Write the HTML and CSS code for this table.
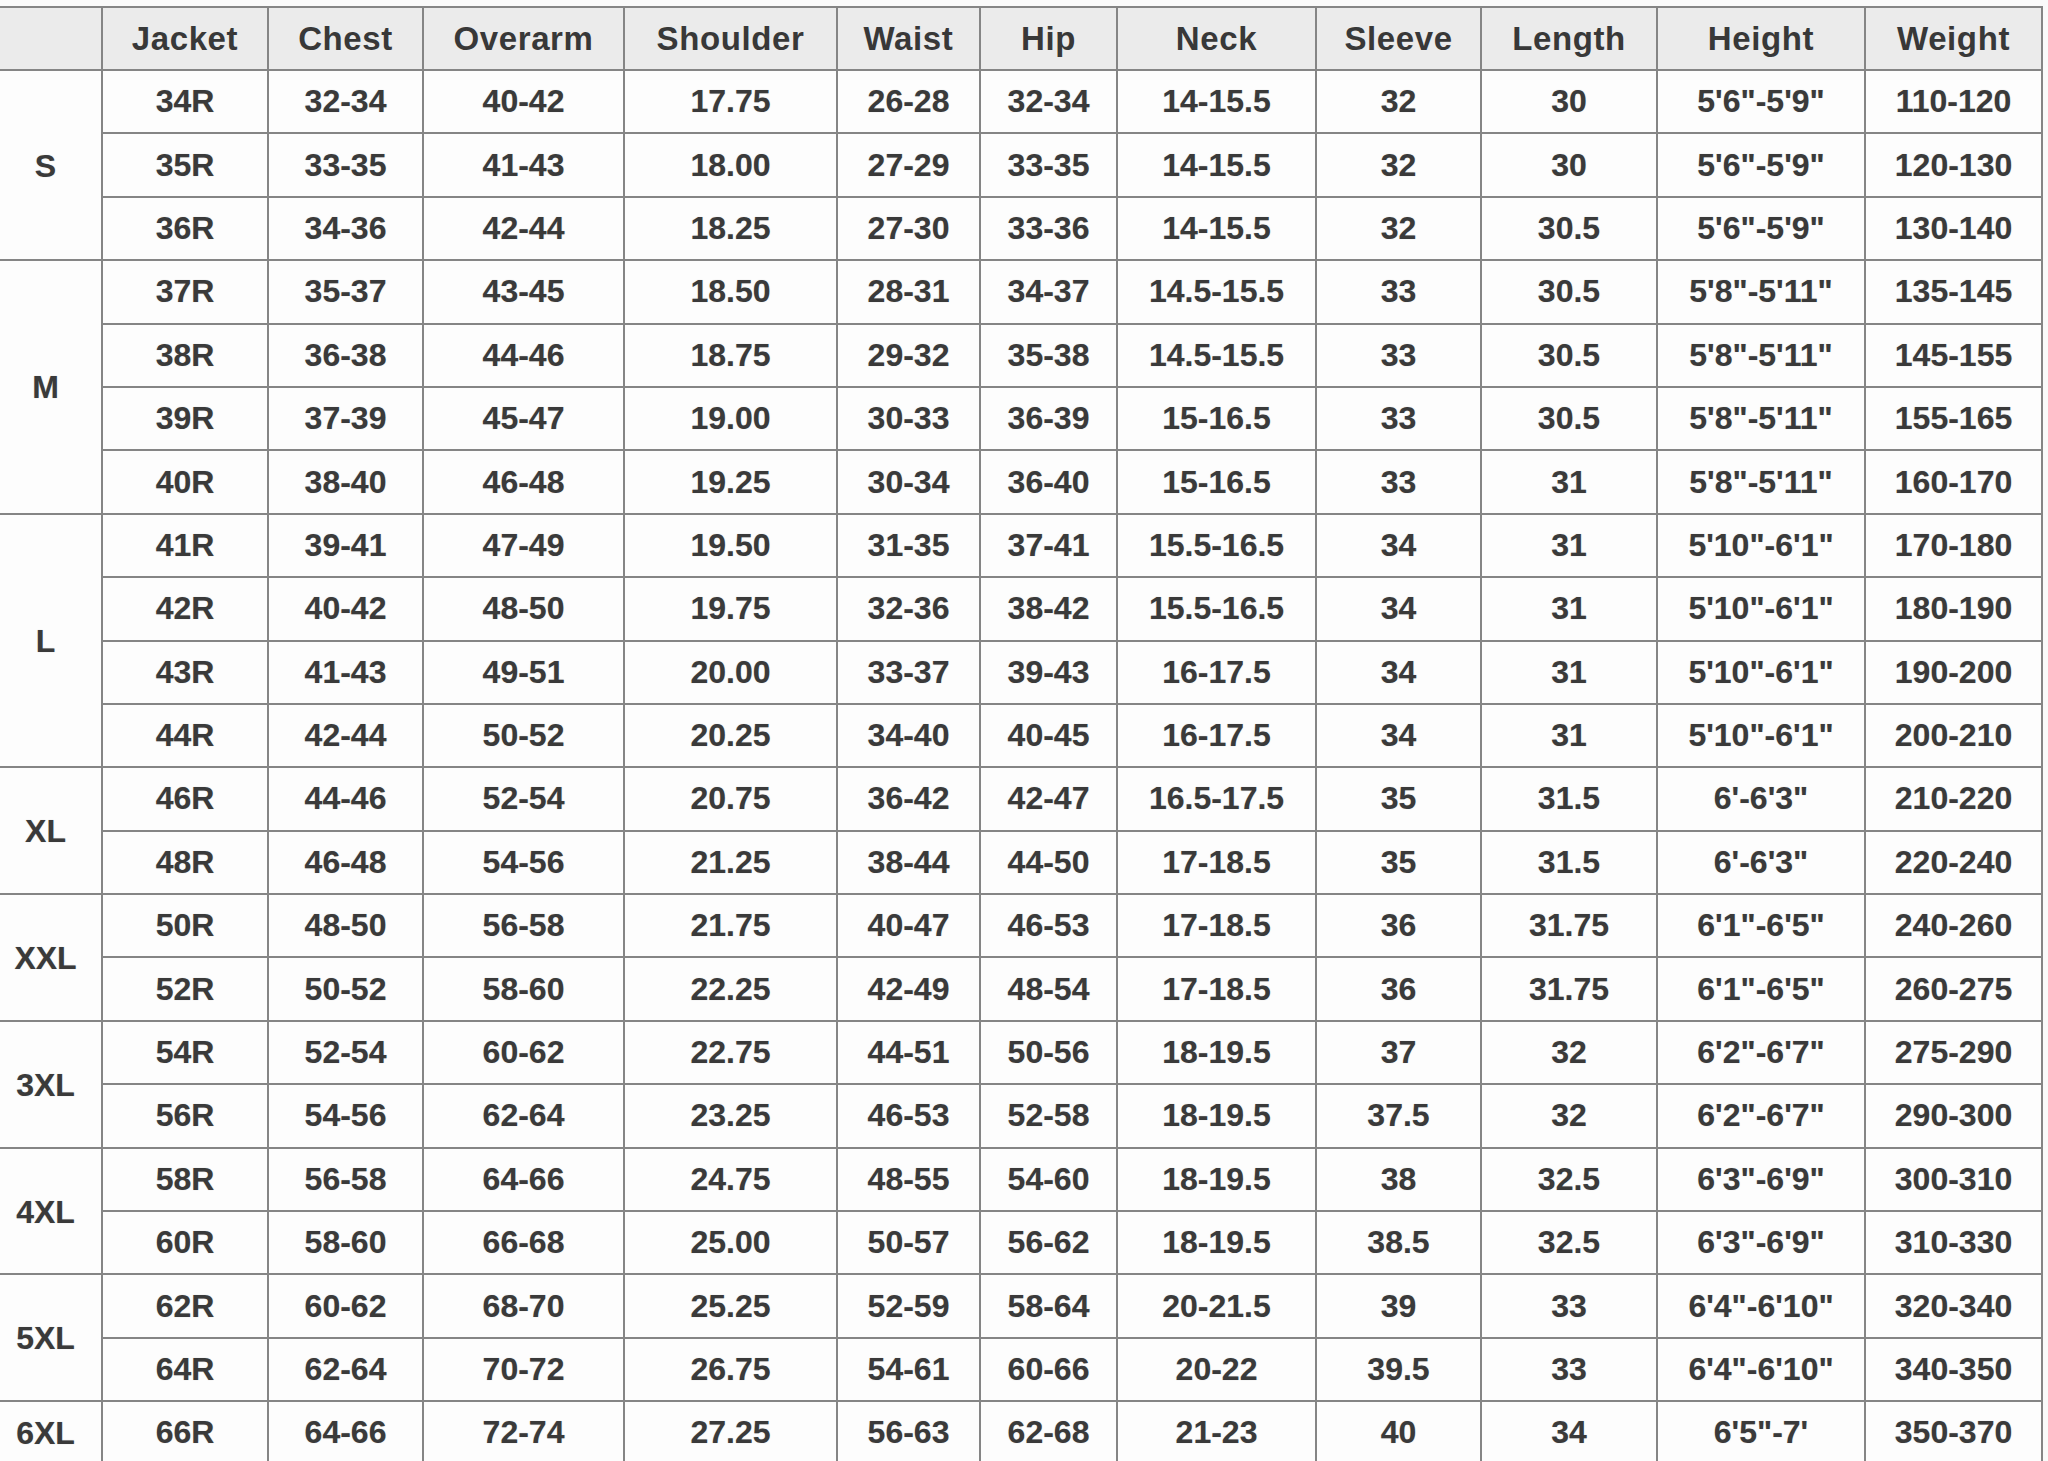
FILE: index.html
```html
<!DOCTYPE html>
<html lang="en">
<head>
<meta charset="utf-8">
<title>Size Chart</title>
<link rel="stylesheet" href="styles.css">
</head>
<body>
<table class="chart">
  <colgroup>
    <col class="c0"><col class="c1"><col class="c2"><col class="c3"><col class="c4"><col class="c5">
    <col class="c6"><col class="c7"><col class="c8"><col class="c9"><col class="c10"><col class="c11">
  </colgroup>
  <thead>
    <tr class="head">
      <th></th><th>Jacket</th><th>Chest</th><th>Overarm</th><th>Shoulder</th><th>Waist</th>
      <th>Hip</th><th>Neck</th><th>Sleeve</th><th>Length</th><th>Height</th><th>Weight</th>
    </tr>
  </thead>
  <tbody>
    <tr class="grp"><td class="size" rowspan="3">S</td><td>34R</td><td>32-34</td><td>40-42</td><td>17.75</td><td>26-28</td><td>32-34</td><td>14-15.5</td><td>32</td><td>30</td><td>5'6"-5'9"</td><td>110-120</td></tr>
    <tr><td>35R</td><td>33-35</td><td>41-43</td><td>18.00</td><td>27-29</td><td>33-35</td><td>14-15.5</td><td>32</td><td>30</td><td>5'6"-5'9"</td><td>120-130</td></tr>
    <tr><td>36R</td><td>34-36</td><td>42-44</td><td>18.25</td><td>27-30</td><td>33-36</td><td>14-15.5</td><td>32</td><td>30.5</td><td>5'6"-5'9"</td><td>130-140</td></tr>

    <tr><td class="size" rowspan="4">M</td><td>37R</td><td>35-37</td><td>43-45</td><td>18.50</td><td>28-31</td><td>34-37</td><td>14.5-15.5</td><td>33</td><td>30.5</td><td>5'8"-5'11"</td><td>135-145</td></tr>
    <tr><td>38R</td><td>36-38</td><td>44-46</td><td>18.75</td><td>29-32</td><td>35-38</td><td>14.5-15.5</td><td>33</td><td>30.5</td><td>5'8"-5'11"</td><td>145-155</td></tr>
    <tr><td>39R</td><td>37-39</td><td>45-47</td><td>19.00</td><td>30-33</td><td>36-39</td><td>15-16.5</td><td>33</td><td>30.5</td><td>5'8"-5'11"</td><td>155-165</td></tr>
    <tr><td>40R</td><td>38-40</td><td>46-48</td><td>19.25</td><td>30-34</td><td>36-40</td><td>15-16.5</td><td>33</td><td>31</td><td>5'8"-5'11"</td><td>160-170</td></tr>

    <tr><td class="size" rowspan="4">L</td><td>41R</td><td>39-41</td><td>47-49</td><td>19.50</td><td>31-35</td><td>37-41</td><td>15.5-16.5</td><td>34</td><td>31</td><td>5'10"-6'1"</td><td>170-180</td></tr>
    <tr><td>42R</td><td>40-42</td><td>48-50</td><td>19.75</td><td>32-36</td><td>38-42</td><td>15.5-16.5</td><td>34</td><td>31</td><td>5'10"-6'1"</td><td>180-190</td></tr>
    <tr><td>43R</td><td>41-43</td><td>49-51</td><td>20.00</td><td>33-37</td><td>39-43</td><td>16-17.5</td><td>34</td><td>31</td><td>5'10"-6'1"</td><td>190-200</td></tr>
    <tr><td>44R</td><td>42-44</td><td>50-52</td><td>20.25</td><td>34-40</td><td>40-45</td><td>16-17.5</td><td>34</td><td>31</td><td>5'10"-6'1"</td><td>200-210</td></tr>

    <tr><td class="size" rowspan="2">XL</td><td>46R</td><td>44-46</td><td>52-54</td><td>20.75</td><td>36-42</td><td>42-47</td><td>16.5-17.5</td><td>35</td><td>31.5</td><td>6'-6'3"</td><td>210-220</td></tr>
    <tr><td>48R</td><td>46-48</td><td>54-56</td><td>21.25</td><td>38-44</td><td>44-50</td><td>17-18.5</td><td>35</td><td>31.5</td><td>6'-6'3"</td><td>220-240</td></tr>

    <tr><td class="size" rowspan="2">XXL</td><td>50R</td><td>48-50</td><td>56-58</td><td>21.75</td><td>40-47</td><td>46-53</td><td>17-18.5</td><td>36</td><td>31.75</td><td>6'1"-6'5"</td><td>240-260</td></tr>
    <tr><td>52R</td><td>50-52</td><td>58-60</td><td>22.25</td><td>42-49</td><td>48-54</td><td>17-18.5</td><td>36</td><td>31.75</td><td>6'1"-6'5"</td><td>260-275</td></tr>

    <tr><td class="size" rowspan="2">3XL</td><td>54R</td><td>52-54</td><td>60-62</td><td>22.75</td><td>44-51</td><td>50-56</td><td>18-19.5</td><td>37</td><td>32</td><td>6'2"-6'7"</td><td>275-290</td></tr>
    <tr><td>56R</td><td>54-56</td><td>62-64</td><td>23.25</td><td>46-53</td><td>52-58</td><td>18-19.5</td><td>37.5</td><td>32</td><td>6'2"-6'7"</td><td>290-300</td></tr>

    <tr><td class="size" rowspan="2">4XL</td><td>58R</td><td>56-58</td><td>64-66</td><td>24.75</td><td>48-55</td><td>54-60</td><td>18-19.5</td><td>38</td><td>32.5</td><td>6'3"-6'9"</td><td>300-310</td></tr>
    <tr><td>60R</td><td>58-60</td><td>66-68</td><td>25.00</td><td>50-57</td><td>56-62</td><td>18-19.5</td><td>38.5</td><td>32.5</td><td>6'3"-6'9"</td><td>310-330</td></tr>

    <tr><td class="size" rowspan="2">5XL</td><td>62R</td><td>60-62</td><td>68-70</td><td>25.25</td><td>52-59</td><td>58-64</td><td>20-21.5</td><td>39</td><td>33</td><td>6'4"-6'10"</td><td>320-340</td></tr>
    <tr><td>64R</td><td>62-64</td><td>70-72</td><td>26.75</td><td>54-61</td><td>60-66</td><td>20-22</td><td>39.5</td><td>33</td><td>6'4"-6'10"</td><td>340-350</td></tr>

    <tr><td class="size">6XL</td><td>66R</td><td>64-66</td><td>72-74</td><td>27.25</td><td>56-63</td><td>62-68</td><td>21-23</td><td>40</td><td>34</td><td>6'5"-7'</td><td>350-370</td></tr>
  </tbody>
</table>
</body>
</html>
```

FILE: styles.css
```css
html, body {
  margin: 0;
  padding: 0;
  background: #fafafa;
  overflow: hidden;
}

.chart {
  margin-top: 6px;
  width: 2043px;
  table-layout: fixed;
  border-collapse: separate;
  border-spacing: 0;
  border-top: 2px solid #858585;
  background: #fdfdfd;
  font-family: "Liberation Sans", Arial, sans-serif;
  font-weight: bold;
  color: #3a3a3a;
}

.c0 { width: 103px; }
.c1 { width: 166px; }
.c2 { width: 155px; }
.c3 { width: 201px; }
.c4 { width: 213px; }
.c5 { width: 143px; }
.c6 { width: 137px; }
.c7 { width: 199px; }
.c8 { width: 165px; }
.c9 { width: 176px; }
.c10 { width: 208px; }
.c11 { width: 177px; }

.chart th,
.chart td {
  box-sizing: border-box;
  padding: 0;
  text-align: center;
  vertical-align: middle;
  border-right: 2px solid #858585;
  border-bottom: 2px solid #858585;
  white-space: nowrap;
  overflow: hidden;
}

.chart th {
  height: 63px;
  background: #ebebeb;
  font-size: 33px;
  letter-spacing: 0.6px;
  color: #383838;
}

.chart td {
  height: 63.4px;
  font-size: 32px;
  text-shadow: 0 0 1px rgba(60, 60, 60, 0.35);
}

.chart td.size {
  background: #fdfdfd;
  padding-right: 10px;
  padding-top: 2px;
}
```
